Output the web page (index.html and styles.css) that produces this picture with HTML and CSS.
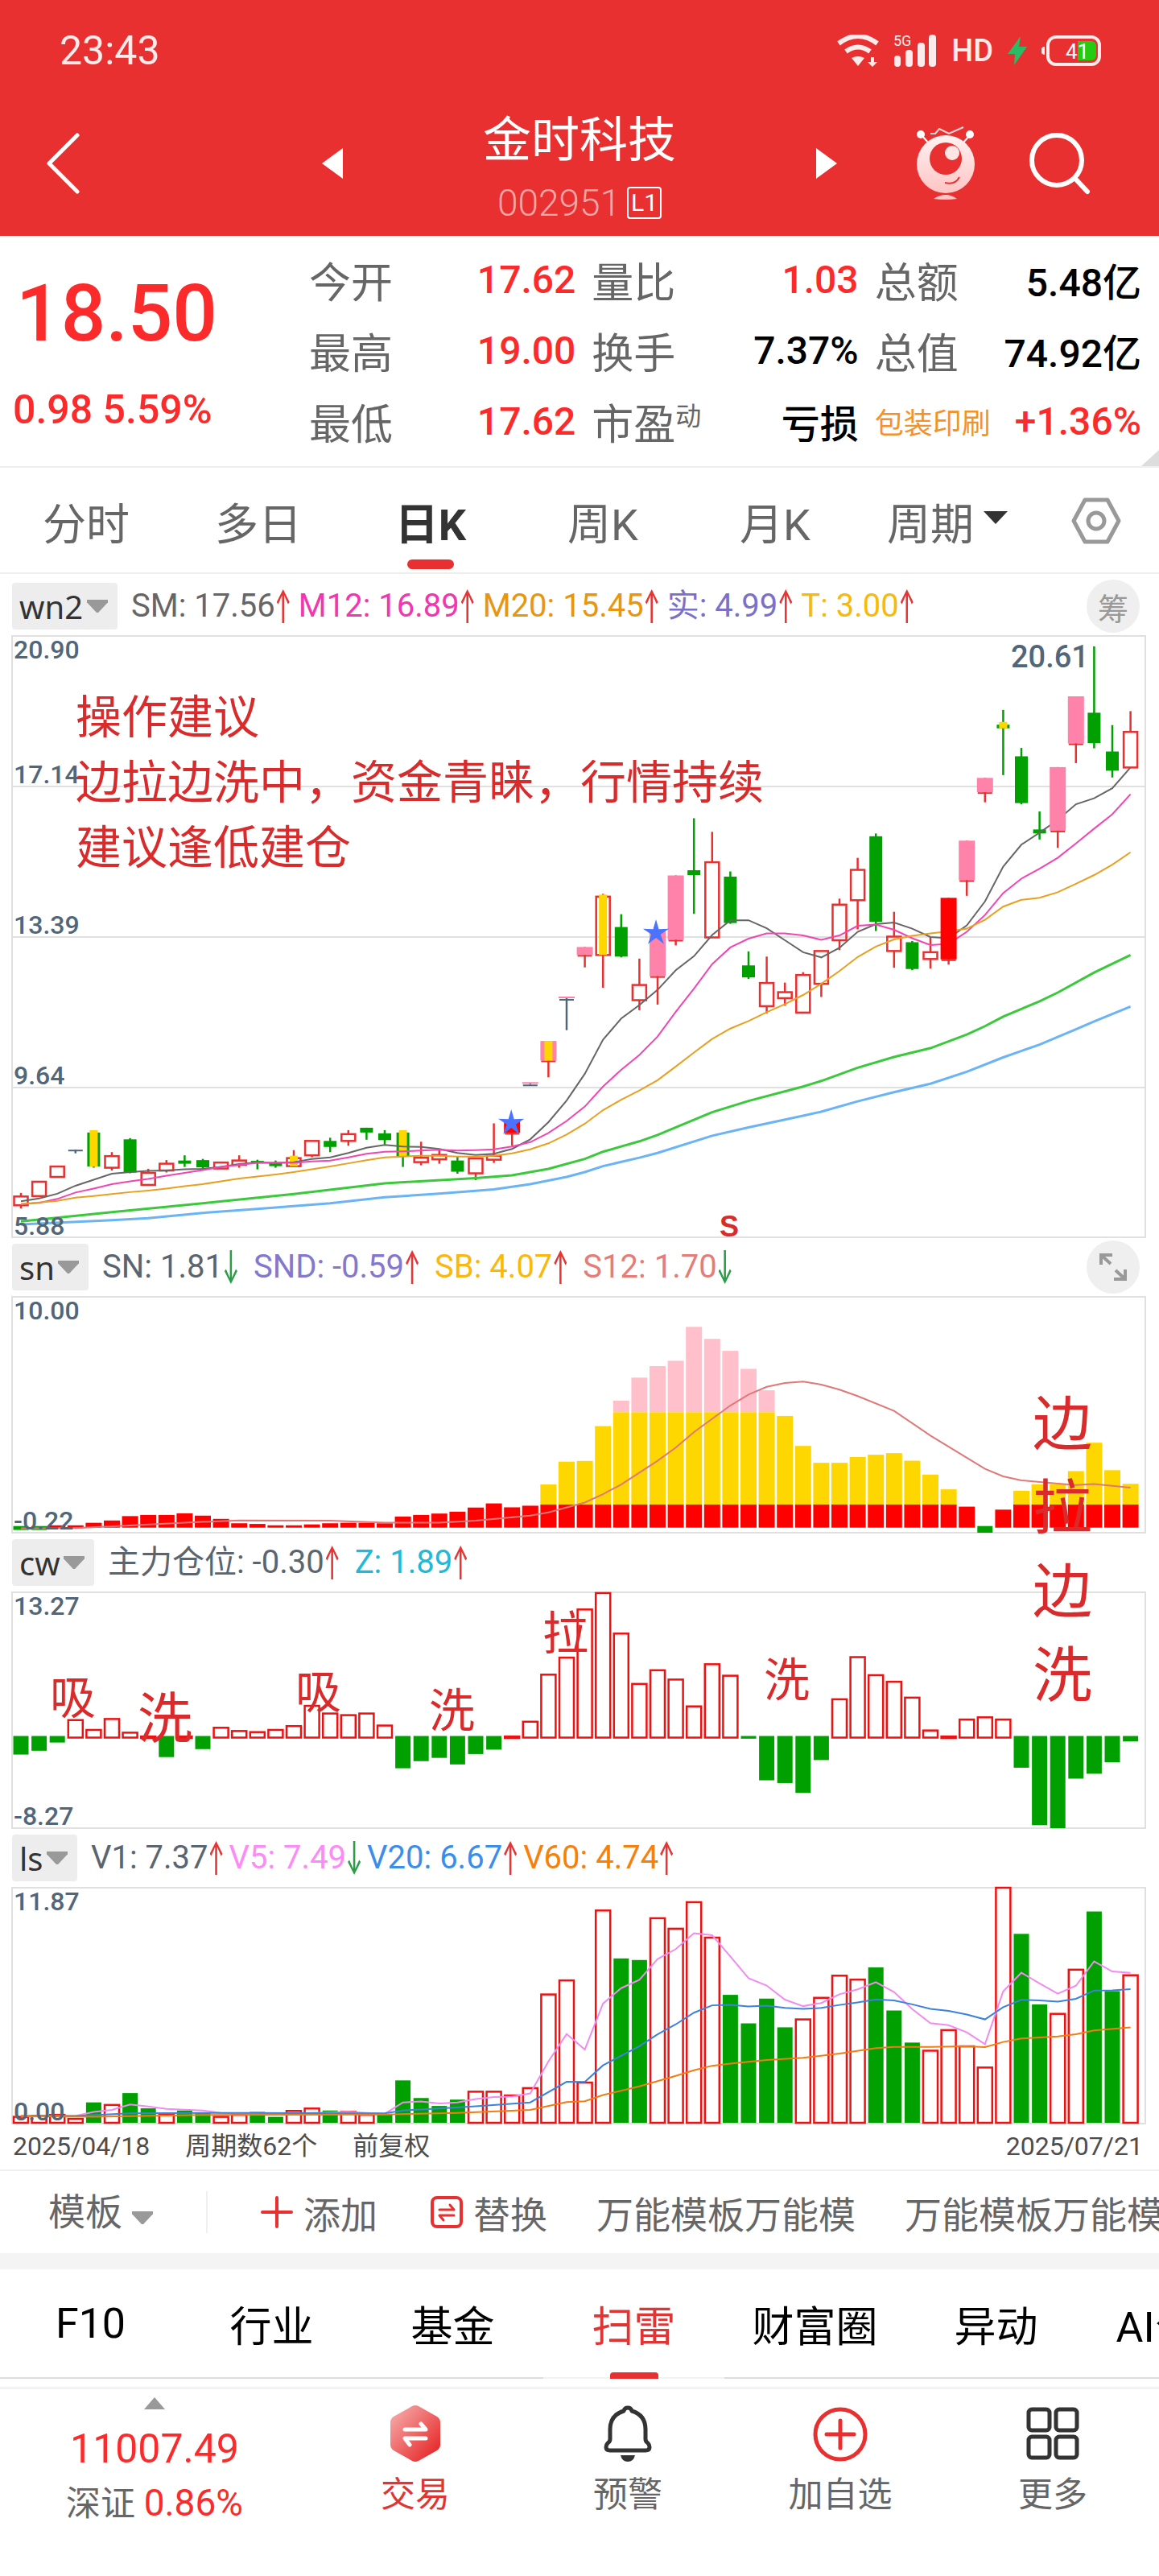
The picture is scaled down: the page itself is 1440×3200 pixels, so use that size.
FILE: index.html
```html
<!DOCTYPE html>
<html lang="zh-CN">
<head>
  <meta charset="UTF-8">
  <meta name="viewport" content="width=device-width, initial-scale=1">
  <title>金时科技 002951</title>
  <link rel="stylesheet" href="styles.css">
</head>
<body>
  <header class="header">
    <div class="status">
      <span class="time">23:43</span>
      <div class="status-icons">
        <svg width="52" height="40" viewBox="0 0 52 40" fill="none" stroke="#fdeaea" stroke-width="6">
          <path d="M2 11 Q26 -7 50 11"/>
          <path d="M11 21 Q26 10 41 21"/>
          <path d="M18 29 Q26 25 34 29 L26 39 Z" fill="#fdeaea" stroke="none"/>
          <path d="M42 28h4v6h4l-6 6l-6 -6h4z" fill="#fdeaea" stroke="none"/>
        </svg>
        <svg class="signal" width="54" height="48" viewBox="0 -4 54 48" fill="#fdeaea">
          <text x="0" y="14" font-size="18">5G</text>
          <rect x="1" y="26" width="8" height="14" rx="4"/>
          <rect x="15" y="19" width="9" height="21" rx="4"/>
          <rect x="30" y="10" width="9" height="30" rx="4"/>
          <rect x="44" y="0" width="9" height="40" rx="4"/>
        </svg>
        <span class="hd">HD</span>
        <svg width="24" height="36" viewBox="0 0 24 36"><path d="M16 0L0 22H9L8 36L24 13H14Z" fill="#2bbb63"/></svg>
        <svg class="battery" width="74" height="38" viewBox="0 0 74 38">
          <path d="M4 14v10a5 5 0 0 1 0 -10z" fill="#fdeaea"/>
          <rect x="8" y="2" width="64" height="34" rx="10" fill="none" stroke="#fdeaea" stroke-width="4"/>
          <path d="M45 7h17a6 6 0 0 1 6 6v12a6 6 0 0 1 -6 6h-17z" fill="#22cc11"/>
          <text x="30" y="29" font-size="26" fill="#fff">41</text>
        </svg>
      </div>
    </div>
    <div class="nav">
      <button class="icon-btn nav-back" aria-label="返回">
        <svg width="42" height="76" viewBox="0 0 42 76"><path d="M39 3L4 38L39 73" fill="none" stroke="#fff" stroke-width="5" stroke-linecap="round" stroke-linejoin="round"/></svg>
      </button>
      <div class="nav-stock">
        <button class="icon-btn" aria-label="上一只">
          <svg width="26" height="38" viewBox="0 0 26 38"><path d="M26 0V38L0 19Z" fill="#fff"/></svg>
        </button>
        <div class="stock">
          <h1>金时科技</h1>
          <p>002951<span class="level">L1</span></p>
        </div>
        <button class="icon-btn" aria-label="下一只">
          <svg width="26" height="38" viewBox="0 0 26 38"><path d="M0 0V38L26 19Z" fill="#fff"/></svg>
        </button>
      </div>
      <div class="nav-actions">
        <button class="icon-btn" aria-label="助手">
          <svg width="74" height="92" viewBox="0 0 74 92">
            <defs>
              <linearGradient id="robot" x1="0" y1="0" x2="0" y2="1">
                <stop offset="0" stop-color="#fff2f2"/>
                <stop offset="1" stop-color="#ffc4c4"/>
              </linearGradient>
            </defs>
            <path d="M18 9H24L29 3L41 9L59 1" fill="none" stroke="#ffd9d9" stroke-width="2"/>
            <path d="M7 11L16 21M67 11L58 21" stroke="#fff" stroke-width="2"/>
            <circle cx="6" cy="10" r="5" fill="#fff"/>
            <circle cx="67" cy="10" r="5" fill="#fff"/>
            <circle cx="37" cy="47" r="36" fill="url(#robot)"/>
            <circle cx="37" cy="40" r="20" fill="#e83030"/>
            <circle cx="45" cy="33" r="9" fill="#ffe4e4"/>
            <path d="M36 70Q49 73 54 63" fill="none" stroke="#e83030" stroke-width="2"/>
            <path d="M22 90Q37 80 51 90Q37 92 22 90Z" fill="#ffc4c4"/>
          </svg>
        </button>
        <button class="icon-btn" aria-label="搜索">
          <svg width="78" height="78" viewBox="0 0 78 78" fill="none" stroke="#fff" stroke-linecap="round"><circle cx="35" cy="35" r="31" stroke-width="6"/><path d="M58 58L73 74" stroke-width="6"/></svg>
        </button>
      </div>
    </div>
  </header>

  <section class="quote">
    <div class="price">
      <strong>18.50</strong>
      <span>0.98 5.59%</span>
    </div>
    <dl class="facts">
      <div><dt>今开</dt><dd class="up">17.62</dd></div>
      <div><dt>量比</dt><dd class="up">1.03</dd></div>
      <div><dt>总额</dt><dd>5.48亿</dd></div>
      <div><dt>最高</dt><dd class="up">19.00</dd></div>
      <div><dt>换手</dt><dd>7.37%</dd></div>
      <div><dt>总值</dt><dd>74.92亿</dd></div>
      <div><dt>最低</dt><dd class="up">17.62</dd></div>
      <div><dt>市盈<sup>动</sup></dt><dd>亏损</dd></div>
      <div><dt class="sector">包装印刷</dt><dd class="up">+1.36%</dd></div>
    </dl>
  </section>

  <nav class="period-tabs">
    <button>分时</button>
    <button>多日</button>
    <button class="active">日K</button>
    <button>周K</button>
    <button>月K</button>
    <button>周期<i class="caret-dark"></i></button>
    <button class="setting" aria-label="设置">
      <svg width="64" height="60" viewBox="0 0 64 60" fill="none" stroke="#999" stroke-width="5" stroke-linejoin="round"><path d="M18 4H46L60 30L46 56H18L4 30Z"/><circle cx="32" cy="30" r="10"/></svg>
    </button>
  </nav>

  <div class="legend legend-main">
    <label class="picker"><select aria-label="主图指标"><option>wn2</option></select></label>
    <ul>
      <li class="up" style="color:#666666">SM: 17.56</li>
      <li class="up" style="color:#f235b0">M12: 16.89</li>
      <li class="up" style="color:#e8960f">M20: 15.45</li>
      <li class="up" style="color:#7b70c8">实: 4.99</li>
      <li class="up" style="color:#f7b90a">T: 3.00</li>
    </ul>
    <button class="round-btn">筹</button>
  </div>
  <svg class="chart" id="kline" viewBox="0 0 1440 749"></svg>

  <div class="sub-charts">
    <div class="legend">
      <label class="picker"><select aria-label="副图指标一"><option>sn</option></select></label>
      <ul>
        <li class="down" style="color:#5b6570">SN: 1.81</li>
        <li class="up" style="color:#8478cc">SND: -0.59</li>
        <li class="up" style="color:#fbb80c">SB: 4.07</li>
        <li class="down" style="color:#e57c78">S12: 1.70</li>
      </ul>
      <button class="round-btn" aria-label="展开">
        <svg width="34" height="34" viewBox="0 0 34 34" fill="none" stroke="#999" stroke-width="4"><path d="M2 14V2H16M2 2L14 13M32 20V32H18M32 32L20 21"/></svg>
      </button>
    </div>
    <svg class="chart" id="sn" viewBox="0 0 1440 295"></svg>

    <div class="legend">
      <label class="picker"><select aria-label="副图指标二"><option>cw</option></select></label>
      <ul>
        <li class="up" style="color:#5b6570">主力仓位: -0.30</li>
        <li class="up" style="color:#22b8d8">Z: 1.89</li>
      </ul>
    </div>
    <svg class="chart" id="cw" viewBox="0 0 1440 295"></svg>

    <p class="stage">边拉边洗</p>
  </div>

  <div class="legend legend-volume">
    <label class="picker"><select aria-label="副图指标三"><option>ls</option></select></label>
    <ul>
      <li class="up" style="color:#5b6570">V1: 7.37</li>
      <li class="down" style="color:#fb8bf5">V5: 7.49</li>
      <li class="up" style="color:#3a8eea">V20: 6.67</li>
      <li class="up" style="color:#f77f0c">V60: 4.74</li>
    </ul>
  </div>
  <svg class="chart" id="ls" viewBox="0 0 1440 295"></svg>

  <div class="dates">
    <span>2025/04/18</span>
    <span>周期数62个</span>
    <span>前复权</span>
    <span class="date-end">2025/07/21</span>
  </div>

  <div class="templates">
    <label class="template-picker"><select aria-label="模板"><option>模板</option></select></label>
    <button>
      <svg width="40" height="40" viewBox="0 0 40 40" stroke="#e83030" stroke-width="4" stroke-linecap="round"><path d="M20 2V38M2 20H38"/></svg>
      添加
    </button>
    <button class="swap">
      <svg width="40" height="40" viewBox="0 0 40 40" fill="none" stroke="#e83030" stroke-width="4" stroke-linecap="round" stroke-linejoin="round"><rect x="2" y="2" width="36" height="36" rx="6"/><path d="M11 17H29L24 11M29 24H11L16 30" stroke-width="3"/></svg>
      替换
    </button>
    <button class="template">万能模板万能模</button>
    <button class="template">万能模板万能模</button>
  </div>

  <nav class="info-tabs">
    <a href="#">F10</a>
    <a href="#">行业</a>
    <a href="#">基金</a>
    <a href="#" class="active">扫雷</a>
    <a href="#">财富圈</a>
    <a href="#">异动</a>
    <a href="#">AI公告</a>
  </nav>

  <footer class="bottom-nav">
    <button class="index">
      <i class="caret-up"></i>
      <span class="index-value">11007.49</span>
      <span>深证 <em>0.86%</em></span>
    </button>
    <button class="trade">
      <svg width="70" height="72" viewBox="0 0 70 72">
        <defs>
          <linearGradient id="hex" x1="0" y1="0" x2="1" y2="1">
            <stop offset="0.1" stop-color="#f5a5a5"/>
            <stop offset="0.85" stop-color="#e83030"/>
          </linearGradient>
        </defs>
        <path d="M31 2Q35 0 39 2L62 15Q66 18 66 22V50Q66 54 62 57L39 70Q35 72 31 70L8 57Q4 54 4 50V22Q4 18 8 15Z" fill="url(#hex)"/>
        <path d="M22 31H48L42 24M48 42H22L28 50" fill="none" stroke="#fff" stroke-width="5" stroke-linecap="round" stroke-linejoin="round"/>
      </svg>
      交易
    </button>
    <button>
      <svg width="70" height="72" viewBox="0 0 70 72">
        <path d="M35 4Q31 4 30 8Q13 13 13 31V43Q13 46 10 48Q8 50 8 53Q8 57 13 57H57Q62 57 62 53Q62 50 60 48Q57 46 57 43V31Q57 13 40 8Q39 4 35 4Z" fill="none" stroke="#333" stroke-width="5" stroke-linejoin="round"/>
        <path d="M26 63H44Q42 71 35 71Q28 71 26 63Z" fill="#333"/>
      </svg>
      预警
    </button>
    <button>
      <svg width="70" height="72" viewBox="0 0 70 72" fill="none" stroke="#e83030" stroke-width="5" stroke-linecap="round"><circle cx="35" cy="37" r="31"/><path d="M35 20V54M18 37H52"/></svg>
      加自选
    </button>
    <button>
      <svg width="70" height="72" viewBox="0 0 70 72" fill="none" stroke="#333" stroke-width="5"><rect x="5" y="6" width="26" height="26" rx="4"/><rect x="39" y="6" width="26" height="26" rx="4"/><rect x="5" y="40" width="26" height="26" rx="4"/><rect x="39" y="40" width="26" height="26" rx="4"/></svg>
      更多
    </button>
  </footer>

  <script src="charts.js"></script>
</body>
</html>
```

FILE: styles.css
```css
* {
  box-sizing: border-box;
}

body {
  margin: 0;
  background: #fff;
  color: #000;
  font-family: Roboto, "Noto Sans CJK SC", sans-serif;
  overflow-x: hidden;
}

h1, p, ul, dl, dd {
  margin: 0;
  padding: 0;
}

button, select {
  margin: 0;
  padding: 0;
  border: 0;
  background: none;
  color: inherit;
  font: inherit;
  cursor: pointer;
}

svg {
  display: block;
  flex: none;
}

.up {
  color: #fc2b2b;
}

/* header */
.header {
  background: #e83030;
  color: #fff;
}

.status {
  display: flex;
  align-items: center;
  justify-content: space-between;
  height: 125px;
  padding: 0 72px 0 74px;
}

.time {
  color: #fdeaea;
  font-size: 50px;
}

.status-icons {
  display: flex;
  align-items: center;
  gap: 18px;
  color: #fdeaea;
}

.hd {
  font-size: 38px;
  font-weight: 500;
  line-height: 40px;
}

.nav {
  display: grid;
  grid-template-columns: 1fr 640px 1fr;
  grid-template-rows: 156px;
  align-items: center;
  height: 168px;
}

.icon-btn {
  display: flex;
}

.nav-back {
  padding: 24px 57px;
}

.nav-stock {
  display: flex;
  align-items: center;
  justify-content: space-between;
}

.stock {
  padding-top: 14px;
  text-align: center;
}

.stock h1 {
  font-size: 60px;
  font-weight: 400;
  line-height: 84px;
}

.stock p {
  display: flex;
  align-items: center;
  justify-content: center;
  gap: 8px;
  height: 70px;
  color: #f7a6a6;
  font-size: 46px;
  font-weight: 300;
}

.level {
  padding: 0 3px;
  border: 2px solid #fff;
  border-radius: 4px;
  color: #fff;
  font-size: 30px;
  font-weight: 400;
  line-height: 36px;
}

.nav-actions {
  display: flex;
  align-items: center;
  justify-content: flex-end;
  gap: 66px;
  padding-right: 84px;
}

/* quote */
.quote {
  position: relative;
  display: flex;
  height: 288px;
  padding: 10px 22px 0 16px;
  border-bottom: 2px solid #eee;
  font-weight: 500;
}

.quote::after {
  content: "";
  position: absolute;
  right: 0;
  bottom: 0;
  border-bottom: 20px solid #ddd;
  border-left: 22px solid transparent;
}

.price {
  display: flex;
  flex-direction: column;
  width: 368px;
  padding-top: 32px;
  color: #fc2b2b;
  font-size: 50px;
}

.price strong {
  padding-left: 4px;
  font-size: 98px;
  font-weight: 500;
  line-height: 110px;
}

.price span {
  padding-top: 34px;
  line-height: 60px;
}

.facts {
  display: grid;
  flex: 1;
  grid-template-columns: repeat(3, 1fr);
  grid-auto-rows: 88px;
  column-gap: 20px;
}

.facts div {
  display: flex;
  align-items: center;
  justify-content: space-between;
  font-size: 48px;
  white-space: nowrap;
}

.facts dt {
  color: #666;
  font-size: 52px;
  font-weight: 400;
}

.facts sup {
  font-size: 32px;
  line-height: 0;
}

.facts .sector {
  color: #f4922a;
  font-size: 36px;
}

/* period tabs */
.period-tabs {
  display: flex;
  height: 132px;
  border-bottom: 2px solid #eee;
  color: #666;
  font-size: 54px;
}

.period-tabs button {
  position: relative;
  display: flex;
  flex: 214;
  align-items: center;
  justify-content: center;
  padding-top: 2px;
}

.period-tabs .active {
  color: #333;
  font-weight: 700;
}

.period-tabs .active::after {
  content: "";
  position: absolute;
  bottom: 4px;
  width: 58px;
  height: 12px;
  border-radius: 6px;
  background: #e83030;
}

.period-tabs .setting {
  flex: 156;
}

.caret-dark {
  margin: -8px 0 0 12px;
  border-top: 16px solid #333;
  border-right: 15px solid transparent;
  border-left: 15px solid transparent;
}

/* indicator rows */
.legend {
  display: flex;
  align-items: center;
  height: 72px;
  padding: 0 24px 0 15px;
  font-size: 40px;
}

.legend ul {
  display: flex;
  flex: 1;
  gap: 20px;
  margin-left: 17px;
  list-style: none;
}

.legend-main {
  height: 76px;
  padding-top: 4px;
}

.legend-main ul {
  gap: 11px;
}

.legend-volume ul {
  gap: 8px;
}

.legend li {
  display: flex;
  align-items: center;
  line-height: 58px;
  white-space: nowrap;
}

.legend li::after {
  content: "";
  width: 16px;
  height: 42px;
  margin-left: 2px;
  background: #e53535;
  clip-path: polygon(50% 0, 100% 38%, 88% 44%, 58% 18%, 58% 100%, 42% 100%, 42% 18%, 12% 44%, 0 38%);
}

.legend .down::after {
  background: #2a9d46;
  clip-path: polygon(50% 100%, 100% 62%, 88% 56%, 58% 82%, 58% 0, 42% 0, 42% 82%, 12% 56%, 0 62%);
}

.picker {
  display: flex;
  align-items: center;
  height: 58px;
  padding: 0 12px 0 9px;
  border-radius: 4px;
  background: #ededed;
  color: #333;
  font-family: "Noto Sans", sans-serif;
}

.picker select,
.template-picker select {
  appearance: none;
  outline: none;
}

.picker::after,
.template-picker::after {
  content: "";
  width: 26px;
  height: 16px;
  margin-left: 4px;
  background: #999;
  clip-path: polygon(0 0, 100% 0, 100% 20%, 54% 100%, 46% 100%, 0 20%);
}

.round-btn {
  display: flex;
  align-items: center;
  justify-content: center;
  width: 66px;
  height: 66px;
  border-radius: 50%;
  background: #efefef;
  color: #999;
  font-size: 38px;
}

/* charts */
.chart {
  width: 100%;
  height: auto;
  overflow: visible;
}

.frame {
  fill: none;
  stroke: #e0e0e0;
  stroke-width: 2;
}

.axis {
  fill: #52667a;
  font-size: 32px;
  font-weight: 500;
}

.peak {
  fill: #52667a;
  font-size: 38px;
  font-weight: 500;
}

.advice,
.note {
  fill: #d92b2b;
  font-size: 57px;
}

.note-large {
  fill: #d92b2b;
  font-size: 68px;
}

.sell {
  fill: #d92b2b;
  font-family: "Liberation Sans", Arial, sans-serif;
  font-size: 36px;
  font-weight: 700;
}

.sub-charts {
  position: relative;
}

.stage {
  position: absolute;
  top: 180px;
  right: 83px;
  width: 74px;
  color: #d92b2b;
  font-size: 74px;
  line-height: 104px;
  pointer-events: none;
}

.dates {
  display: flex;
  gap: 44px;
  height: 58px;
  padding: 0 20px 0 16px;
  border-bottom: 2px solid #eee;
  color: #4d4d4d;
  font-size: 32px;
  line-height: 54px;
}

.date-end {
  margin-left: auto;
}

/* templates */
.templates {
  display: flex;
  align-items: center;
  height: 122px;
  padding-left: 60px;
  border-bottom: 20px solid #f4f4f4;
  color: #666;
  font-size: 46px;
  overflow: hidden;
}

.template-picker {
  display: flex;
  flex: none;
  align-items: center;
  width: 198px;
  height: 52px;
  border-right: 2px solid #f0f0f0;
}

.template-picker::after {
  margin: 14px 0 0 12px;
}

.templates button {
  display: flex;
  flex: none;
  align-items: center;
  gap: 13px;
  margin-left: 66px;
  white-space: nowrap;
}

.templates .template {
  margin-left: 61px;
}

/* info tabs */
.info-tabs {
  display: flex;
  height: 136px;
  overflow: hidden;
  font-size: 52px;
}

.info-tabs a {
  position: relative;
  display: flex;
  flex: 0 0 225px;
  align-items: center;
  justify-content: center;
  border-bottom: 2px solid #ddd;
  color: #000;
  text-decoration: none;
  white-space: nowrap;
}

.info-tabs .active {
  border-bottom-color: #f2f2f2;
  color: #e03535;
}

.info-tabs .active::after {
  content: "";
  position: absolute;
  bottom: -2px;
  width: 60px;
  height: 8px;
  border-radius: 4px 4px 0 0;
  background: #e83030;
}

/* bottom nav */
.bottom-nav {
  display: flex;
  height: 236px;
  margin-top: 10px;
  border-top: 3px solid #f2f2f2;
  color: #666;
  font-size: 43px;
}

.bottom-nav button {
  display: flex;
  flex: 264;
  flex-direction: column;
  align-items: center;
  padding-top: 19px;
  line-height: 80px;
}

.bottom-nav .index {
  flex: 384;
  padding-top: 10px;
  line-height: 60px;
}

.index-value {
  margin: 19px 0 7px;
  color: #fc2b2b;
  font-size: 50px;
}

.index em {
  color: #fc2b2b;
  font-size: 46px;
  font-style: normal;
}

.caret-up {
  border-right: 13px solid transparent;
  border-bottom: 15px solid #999;
  border-left: 13px solid transparent;
}

.bottom-nav .trade {
  color: #e03535;
}
```

FILE: charts.js
```js
const STEP = 22.6;
const LEFT = 26;
const RED = '#ee1111';
const GREEN = '#00a000';

const x = i => LEFT + STEP * i;

function rect(cx, y1, y2, w, fill, stroke) {
  const s = stroke ? ` stroke="${stroke}" stroke-width="2.5"` : '';
  return `<rect x="${cx - w / 2}" y="${y1}" width="${w}" height="${Math.max(y2 - y1, 2)}" fill="${fill}"${s}/>`;
}

function vline(cx, y1, y2, color) {
  return `<path d="M${cx} ${y1}V${y2}" stroke="${color}" stroke-width="2.5"/>`;
}

function hline(y) {
  return `<path class="frame" d="M15 ${y}H1423"/>`;
}

// points: plain values for every bar, or [bar, value] pairs
function curve(points, scale, color, width) {
  const d = points.map((p, i) => Array.isArray(p) ? `${x(p[0])},${scale(p[1])}` : `${x(i)},${scale(p)}`);
  return `<polyline points="${d.join(' ')}" fill="none" stroke="${color}" stroke-width="${width}"/>`;
}

function text(cls, tx, ty, str) {
  return `<text class="${cls}" x="${tx}" y="${ty}">${str}</text>`;
}

function star(cx, cy) {
  let pts = '';
  for (let i = 0; i < 10; i++) {
    const r = i % 2 ? 6 : 17;
    const a = Math.PI * (i / 5 - 0.5);
    pts += `${cx + r * Math.cos(a)},${cy + r * Math.sin(a)} `;
  }
  return `<polygon points="${pts}" fill="#4a74ff"/>`;
}

function frame(h) {
  return `<rect class="frame" x="15" y="1" width="1408" height="${h - 2}"/>`;
}

// type, body top, body bottom, high, low, yellow top (prices in cents)
// r: hollow up, g: down, p: limit-up, s: solid up, d: doji, t: one-price limit-up
const candles = [
  ['r', 688, 666, 697, 658], ['r', 725, 689, 725, 689], ['r', 763, 737, 763, 737], ['d', 805, 805, 805, 796],
  ['g', 848, 763, 848, 760, 854], ['r', 789, 760, 799, 753], ['g', 831, 748, 834, 746], ['r', 747, 717, 757, 717],
  ['r', 770, 753, 779, 748], ['g', 778, 770, 791, 762], ['g', 779, 761, 782, 755], ['r', 773, 758, 773, 758],
  ['r', 778, 767, 791, 760], ['g', 777, 772, 780, 756], ['g', 772, 764, 778, 760], ['r', 784, 764, 804, 764, 790],
  ['r', 827, 791, 827, 786], ['g', 827, 812, 835, 799], ['r', 844, 827, 854, 815], ['g', 860, 848, 860, 830],
  ['g', 846, 829, 854, 818], ['g', 848, 788, 848, 762, 854], ['r', 785, 774, 825, 766], ['r', 792, 781, 805, 770],
  ['g', 778, 750, 788, 745], ['r', 783, 746, 783, 729], ['r', 790, 780, 871, 772], ['s', 880, 847, 880, 815],
  ['t', 972, 968, 972, 968], ['p', 1077, 1028, 1077, 986, 1077], ['t', 1186, 1182, 1186, 1104], ['p', 1312, 1292, 1312, 1261],
  ['r', 1438, 1292, 1445, 1210, 1443], ['g', 1362, 1288, 1394, 1286], ['r', 1217, 1179, 1283, 1154], ['p', 1353, 1239, 1353, 1168],
  ['p', 1491, 1330, 1491, 1316], ['g', 1504, 1492, 1634, 1395], ['r', 1524, 1336, 1600, 1336], ['g', 1488, 1372, 1501, 1370],
  ['g', 1266, 1236, 1301, 1232], ['r', 1222, 1164, 1288, 1146], ['r', 1199, 1184, 1223, 1165], ['r', 1242, 1148, 1249, 1148],
  ['r', 1302, 1220, 1302, 1187], ['r', 1418, 1329, 1433, 1304], ['r', 1505, 1429, 1535, 1356], ['g', 1589, 1375, 1596, 1352],
  ['r', 1338, 1302, 1400, 1260], ['g', 1324, 1257, 1327, 1254], ['r', 1299, 1282, 1337, 1258], ['s', 1435, 1281, 1435, 1268],
  ['p', 1578, 1479, 1578, 1440], ['p', 1735, 1699, 1735, 1674], ['g', 1868, 1859, 1905, 1742, 1875], ['g', 1789, 1672, 1810, 1669],
  ['g', 1606, 1596, 1651, 1581], ['p', 1762, 1603, 1762, 1560], ['p', 1939, 1821, 1939, 1772], ['g', 1898, 1822, 2064, 1809],
  ['g', 1801, 1753, 1867, 1736], ['r', 1850, 1761, 1902, 1760]
];

const sm = [676, 683, 695, 715, 730, 745, 749, 752, 753, 756, 757, 762, 769, 773, 772, 774, 782, 786, 797, 810, 817, 813, 812, 807, 797, 792, 795, 807, 831, 874, 928, 995, 1080, 1133, 1167, 1205, 1254, 1289, 1342, 1379, 1379, 1359, 1329, 1299, 1286, 1310, 1350, 1369, 1373, 1358, 1337, 1334, 1366, 1426, 1513, 1568, 1598, 1630, 1669, 1684, 1709, 1761];
const m12 = [669, 672, 682, 698, 708, 719, 726, 732, 740, 747, 754, 762, 767, 772, 772, 772, 776, 778, 786, 795, 800, 801, 803, 805, 803, 804, 806, 813, 824, 847, 877, 913, 963, 1005, 1042, 1088, 1150, 1208, 1269, 1311, 1333, 1346, 1346, 1341, 1330, 1341, 1365, 1368, 1355, 1334, 1317, 1320, 1350, 1392, 1447, 1483, 1508, 1535, 1571, 1608, 1644, 1694];
const m20 = [669, 673, 677, 685, 689, 694, 699, 703, 708, 714, 719, 726, 733, 738, 743, 749, 756, 763, 771, 779, 786, 788, 790, 790, 788, 788, 790, 796, 806, 821, 843, 870, 904, 930, 953, 979, 1013, 1048, 1082, 1108, 1127, 1149, 1169, 1192, 1220, 1252, 1287, 1313, 1331, 1340, 1346, 1351, 1358, 1380, 1413, 1430, 1435, 1449, 1470, 1492, 1518, 1549];
const green = [[0, 626], [5, 649], [10, 671], [15, 694], [20, 721], [25, 734], [27, 741], [29, 757], [31, 782], [32, 800], [34, 826], [35, 842], [38, 899], [40, 927], [43, 963], [44, 977], [46, 1010], [48, 1037], [50, 1059], [52, 1093], [53, 1114], [54, 1138], [56, 1176], [57, 1198], [59, 1248], [61, 1292]];
const blue = [[0, 618], [5, 629], [7, 634], [10, 647], [13, 657], [17, 671], [20, 686], [23, 695], [26, 706], [28, 719], [30, 737], [31, 749], [32, 764], [34, 785], [35, 797], [38, 840], [40, 861], [43, 890], [44, 900], [46, 926], [48, 949], [50, 970], [52, 1000], [54, 1036], [56, 1068], [58, 1106], [59, 1126], [61, 1163]];

function drawKline() {
  const y = p => 1 + (2090 - p) / 1504 * 747;
  let out = frame(749) + hline(188) + hline(375) + hline(562);

  candles.forEach(([type, top, bottom, high, low, yellow], i) => {
    const c = x(i);
    const color = type === 'g' ? GREEN : type === 'd' || type === 't' ? '#52667a' : '#e83030';
    if (type === 'r') {
      out += vline(c, y(high), y(top), color) + vline(c, y(bottom), y(low), color);
      out += rect(c, y(top), y(bottom), 17, 'none', color);
    } else if (type !== 'p' && type !== 's') {
      out += vline(c, y(high), y(low), color);
      if (type === 'g') out += rect(c, y(top), y(bottom), 16, GREEN);
      else out += rect(c, y(bottom), y(bottom), 18, color);
      if (type === 't') out += rect(c, y(top) - 1, y(bottom) - 1, 20, '#ff82aa');
    }
    if (yellow && type !== 'p') out += rect(c, y(yellow), y(bottom), 10, '#ffd700');
  });

  out += curve(sm, y, '#666', 2) + curve(m12, y, '#f046b4', 2) + curve(m20, y, '#e8a020', 2);
  out += curve(green, y, '#3cc83c', 3) + curve(blue, y, '#6ab4f5', 3);

  // filled up bars cover the average lines
  candles.forEach(([type, top, bottom, high, low, yellow], i) => {
    if (type !== 'p' && type !== 's') return;
    const c = x(i);
    out += vline(c, y(high), y(low), '#e83030');
    out += rect(c, y(top), y(bottom), 20, type === 's' ? '#ff0000' : '#ff82aa');
    out += rect(c, y(bottom), y(bottom), 18, '#e83030');
    if (yellow) out += rect(c, y(yellow), y(bottom), 10, '#ffd700');
  });

  out += star(x(27) - 1, 606) + star(x(35) - 2, 370);
  out += text('axis', 17, 29, '20.90') + text('axis', 17, 184, '17.14') + text('axis', 17, 371, '13.39');
  out += text('axis', 17, 558, '9.64') + text('axis', 17, 745, '5.88');
  out += text('peak', 1256, 40, '20.61') + text('sell', 894, 747, 'S');
  out += text('advice', 94, 122, '操作建议');
  out += text('advice', 94, 203, '边拉边洗中，资金青睐，行情持续');
  out += text('advice', 94, 284, '建议逢低建仓');
  document.getElementById('kline').innerHTML = out;
}

const snBars = [-0.1, -0.1, 0.1, 0.1, 0.21, 0.31, 0.5, 0.55, 0.55, 0.62, 0.52, 0.38, 0.19, 0.16, 0.1, 0.1, 0.14, 0.19, 0.21, 0.21, 0.19, 0.48, 0.55, 0.61, 0.69, 0.87, 1.05, 0.88, 0.95, 1.87, 2.86, 2.89, 4.4, 5.5, 6.5, 7, 7.23, 8.7, 8.18, 7.66, 6.88, 5.95, 4.84, 3.54, 2.81, 2.81, 3.06, 3.16, 3.23, 2.9, 2.3, 1.66, 0.91, -0.22, 0.78, 1.6, 1.88, 1.88, 2.45, 3.68, 2.49, 1.9];
const s12 = [[0, -0.03], [3, -0.02], [6, 0.09], [9, 0.22], [12, 0.31], [17, 0.3], [20, 0.22], [23, 0.22], [25, 0.3], [28, 0.52], [29, 0.66], [31, 1.09], [32, 1.45], [33, 1.87], [35, 2.9], [36, 3.47], [37, 4.14], [39, 5.29], [40, 5.77], [41, 6.1], [42, 6.27], [43, 6.33], [44, 6.2], [45, 5.98], [46, 5.7], [48, 5.06], [50, 3.99], [53, 2.55], [54, 2.22], [55, 2.05], [57, 1.91], [58, 1.85], [59, 1.89], [61, 1.73]];

function drawSn() {
  const y = v => 1 + (10 - v) / 10.22 * 293;
  let out = frame(295);
  snBars.forEach((v, i) => {
    const c = x(i);
    if (v < 0) {
      out += rect(c, y(0) - 2, y(v), 19, GREEN);
      return;
    }
    if (v > 5) out += rect(c, y(v), y(5), 20, '#ffc0cb');
    if (v > 1.1) out += rect(c, y(Math.min(v, 5)), y(1), 20, '#ffd700');
    out += rect(c, y(v > 1.1 ? 1 : v), y(0), 20, '#ff0000');
  });
  out += curve(s12, y, '#e07878', 2);
  out += text('axis', 17, 29, '10.00') + text('axis', 17, 290, '-0.22');
  document.getElementById('sn').innerHTML = out;
}

const cwBars = [-1.55, -1.2, -0.45, 1.6, 0.7, 1.7, 0.45, 0.1, -1.78, 0.1, -1.05, 0.9, 0.6, 0.5, 0.7, 1.05, 2.9, 2.2, 2.05, 2.2, 1.1, -2.8, -2.15, -1.85, -2.45, -1.5, -1.1, 0.1, 1.45, 5.75, 7.3, 11.7, 13.2, 9.5, 4.9, 6.15, 5.3, 2.85, 6.7, 5.65, -0.1, -3.9, -4.15, -5.05, -2.05, 3.5, 7.35, 5.7, 5.1, 3.65, 0.65, 0.1, 1.65, 1.85, 1.65, -2.75, -8, -8.27, -3.75, -3.3, -2.25, -0.35];

function drawCw() {
  const y = v => 1 + (13.27 - v) / 21.54 * 293;
  let out = frame(295);
  cwBars.forEach((v, i) => {
    if (v > 0) out += rect(x(i), y(v), y(0), 18, 'none', RED);
    else out += rect(x(i), y(0) - 2, y(v), 19, GREEN);
  });
  out += text('axis', 17, 29, '13.27') + text('axis', 17, 290, '-8.27');
  out += text('note', 62, 152, '吸') + text('note-large', 171, 182, '洗') + text('note', 367, 145, '吸');
  out += text('note', 533, 168, '洗') + text('note', 674, 72, '拉') + text('note', 949, 130, '洗');
  document.getElementById('cw').innerHTML = out;
}

const volumes = [0.3, 0.35, 0.4, 0.2, 1.03, 0.9, 1.5, 0.73, 0.45, 0.62, 0.5, 0.3, 0.4, 0.55, 0.3, 0.6, 0.72, 0.62, 0.55, 0.4, 0.45, 2.14, 1.25, 0.85, 1.17, 1.57, 1.57, 1.38, 1.75, 6.48, 7.19, 2.03, 10.72, 8.3, 8.22, 10.33, 9.8, 11.14, 9.35, 6.46, 5.02, 6.27, 4.82, 5.22, 6.31, 7.43, 7.23, 7.85, 5.67, 4.05, 3.64, 4.68, 3.86, 2.79, 11.87, 9.54, 5.98, 5.5, 7.73, 10.67, 6.65, 7.45];
const fallDays = [4, 6, 7, 9, 10, 13, 14, 17, 20, 21, 22, 23, 24, 33, 34, 39, 40, 41, 42, 47, 48, 49, 55, 56, 59, 60];
const v5 = [[0, 0.35], [3, 0.35], [4, 0.55], [5, 0.65], [6, 0.92], [7, 0.82], [8, 0.7], [10, 0.62], [11, 0.5], [14, 0.45], [16, 0.5], [18, 0.55], [20, 0.45], [21, 1.03], [22, 1.08], [23, 0.98], [24, 1.03], [25, 1.2], [26, 1.3], [27, 1.32], [28, 1.48], [29, 3.1], [30, 4.48], [31, 3.7], [32, 6.02], [33, 6.8], [34, 7.22], [35, 8.27], [36, 8.77], [37, 9.57], [38, 9.47], [39, 8.4], [40, 7.3], [41, 6.93], [42, 6.22], [43, 5.89], [44, 6.05], [45, 6.49], [46, 6.74], [47, 7.1], [48, 6.6], [49, 5.74], [50, 5.03], [51, 4.93], [52, 4.57], [53, 3.97], [54, 6.63], [55, 7.58], [56, 7.04], [57, 6.52], [58, 6.92], [59, 8.15], [60, 7.64], [61, 7.57]];
const v20 = [[0, 0.35], [3, 0.35], [6, 0.48], [12, 0.5], [20, 0.48], [21, 0.62], [23, 0.72], [25, 0.83], [28, 1.03], [30, 2.07], [31, 2.06], [32, 2.9], [34, 3.87], [35, 4.47], [36, 4.97], [37, 5.56], [38, 5.93], [39, 5.96], [40, 5.87], [41, 5.91], [42, 5.8], [43, 5.75], [44, 5.8], [45, 5.95], [46, 6.08], [47, 6.23], [48, 6.18], [49, 5.98], [50, 5.75], [51, 5.65], [52, 5.47], [53, 5.22], [54, 5.84], [55, 6.21], [56, 6.18], [57, 6.12], [58, 6.26], [59, 6.68], [60, 6.69], [61, 6.75]];
const v60 = [[0, 0.33], [4, 0.3], [10, 0.4], [20, 0.42], [24, 0.5], [28, 0.65], [30, 1.05], [31, 1.09], [32, 1.4], [34, 1.84], [36, 2.37], [37, 2.65], [38, 2.88], [39, 2.99], [41, 3.17], [43, 3.28], [45, 3.5], [47, 3.77], [48, 3.83], [50, 3.83], [52, 3.86], [53, 3.82], [54, 4.08], [55, 4.26], [57, 4.36], [58, 4.47], [59, 4.66], [61, 4.82]];

function drawLs() {
  const y = v => 1 + (11.87 - v) / 11.87 * 292;
  let out = frame(295);
  volumes.forEach((v, i) => {
    if (fallDays.includes(i)) out += rect(x(i), y(v), y(0), 19, GREEN);
    else out += rect(x(i), y(v), y(0), 18, 'none', RED);
  });
  out += curve(v5, y, '#f08cf0', 2) + curve(v20, y, '#3c82dc', 2) + curve(v60, y, '#f07d14', 2);
  out += text('axis', 17, 29, '11.87') + text('axis', 17, 290, '0.00');
  document.getElementById('ls').innerHTML = out;
}

drawKline();
drawSn();
drawCw();
drawLs();
```
